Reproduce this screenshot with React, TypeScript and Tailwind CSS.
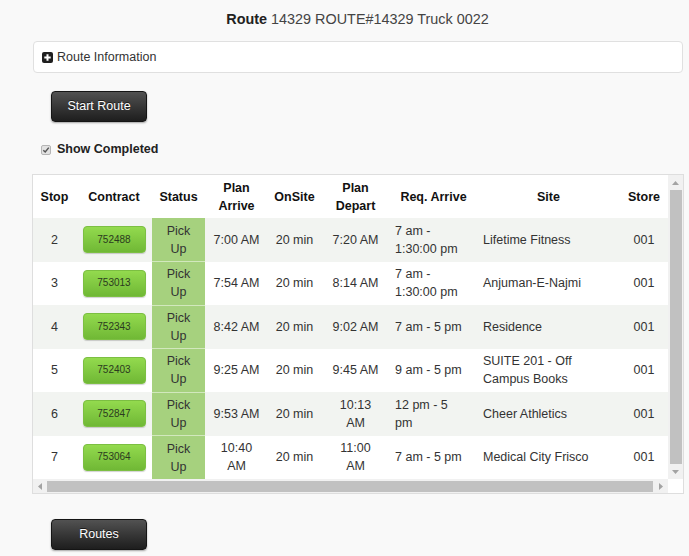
import React from "react";

type Row = {
  stop: string;
  contract: string;
  arrive: React.ReactNode;
  depart: React.ReactNode;
  req: React.ReactNode;
  site: React.ReactNode;
};

const rows: Row[] = [
  { stop: "2", contract: "752488", arrive: "7:00 AM", depart: "7:20 AM", req: <>7 am -<br />1:30:00 pm</>, site: "Lifetime Fitness" },
  { stop: "3", contract: "753013", arrive: "7:54 AM", depart: "8:14 AM", req: <>7 am -<br />1:30:00 pm</>, site: "Anjuman-E-Najmi" },
  { stop: "4", contract: "752343", arrive: "8:42 AM", depart: "9:02 AM", req: "7 am - 5 pm", site: "Residence" },
  { stop: "5", contract: "752403", arrive: "9:25 AM", depart: "9:45 AM", req: "9 am - 5 pm", site: <>SUITE 201 - Off<br />Campus Books</> },
  { stop: "6", contract: "752847", arrive: "9:53 AM", depart: <>10:13<br />AM</>, req: <>12 pm - 5<br />pm</>, site: "Cheer Athletics" },
  { stop: "7", contract: "753064", arrive: <>10:40<br />AM</>, depart: <>11:00<br />AM</>, req: "7 am - 5 pm", site: "Medical City Frisco" },
];

function DarkButton({ children }: { children: React.ReactNode }) {
  return (
    <button className="w-[96px] h-[31px] rounded-[4px] border border-[#151515] bg-gradient-to-b from-[#525252] to-[#1e1e1e] text-white text-[12.5px] shadow-[0_1px_2px_rgba(0,0,0,0.35)] [text-shadow:0_-1px_0_rgba(0,0,0,0.6)]">
      {children}
    </button>
  );
}

export default function App() {
  return (
    <div className="w-[689px] h-[556px] overflow-hidden bg-[#f9f9f9] font-['Liberation_Sans',Arial,sans-serif] text-[#333]">
      {/* Title */}
      <div className="pt-[10px] pl-[26px] text-center text-[14.4px] leading-[18px] text-[#444]">
        <span className="font-bold text-[#222]">Route</span> 14329 ROUTE#14329 Truck 0022
      </div>

      {/* Route Information panel */}
      <div className="mt-[13px] ml-[33px] w-[650px] h-[32px] rounded-[4px] border border-[#e0e0e0] bg-white flex items-center pl-[8px] gap-[4px] text-[12.5px] text-[#333]">
        <svg width="11" height="11" viewBox="0 0 11 11">
          <rect x="0" y="0" width="11" height="11" rx="2" fill="#1f1f1f" />
          <path d="M5.5 2.3v6.4M2.3 5.5h6.4" stroke="#fff" strokeWidth="2" />
        </svg>
        <span>Route Information</span>
      </div>

      {/* Start Route */}
      <div className="mt-[18px] ml-[51px]">
        <DarkButton>Start Route</DarkButton>
      </div>

      {/* Show Completed */}
      <div className="mt-[19px] ml-[41px] flex items-center gap-[6px] h-[17px]">
        <span className="w-[10px] h-[10px] rounded-[2px] border border-[#b5b5b5] bg-[#e2e2e2] flex items-center justify-center">
          <svg width="8" height="8" viewBox="0 0 8 8">
            <path d="M1.3 4.2 L3.2 6 L6.8 1.6" fill="none" stroke="#555" strokeWidth="1.5" />
          </svg>
        </span>
        <span className="font-bold text-[12.5px] text-[#222]">Show Completed</span>
      </div>

      {/* Table container */}
      <div className="mt-[16px] ml-[32px] w-[652px] border border-[#dedede] bg-white">
        <div className="flex">
          <div className="w-[635px] h-[304px] overflow-hidden">
            <table className="table-fixed w-[635px] border-collapse text-[12.5px] leading-[18px]">
              <colgroup>
                <col className="w-[43px]" />
                <col className="w-[76px]" />
                <col className="w-[53px]" />
                <col className="w-[63px]" />
                <col className="w-[53px]" />
                <col className="w-[69px]" />
                <col className="w-[87px]" />
                <col className="w-[143px]" />
                <col className="w-[48px]" />
              </colgroup>
              <thead>
                <tr className="h-[43px] bg-white font-bold text-[#111]">
                  <th className="text-center align-middle font-bold">Stop</th>
                  <th className="text-center align-middle font-bold">Contract</th>
                  <th className="text-center align-middle font-bold">Status</th>
                  <th className="text-center align-middle font-bold">Plan<br />Arrive</th>
                  <th className="text-center align-middle font-bold">OnSite</th>
                  <th className="text-center align-middle font-bold">Plan<br />Depart</th>
                  <th className="text-center align-middle font-bold">Req. Arrive</th>
                  <th className="text-center align-middle font-bold">Site</th>
                  <th className="text-center align-middle font-bold">Store</th>
                </tr>
              </thead>
              <tbody>
                {rows.map((r, i) => (
                  <tr key={r.stop} className={i % 2 === 0 ? "h-[43.5px] bg-[#f2f4f1]" : "h-[43.5px] bg-white"}>
                    <td className="text-center align-middle">{r.stop}</td>
                    <td className="text-center align-middle">
                      <div className="mx-auto w-[63px] h-[27px] rounded-[4px] border border-[#7cbf42] bg-gradient-to-b from-[#93da4e] to-[#70b835] shadow-[0_1px_1px_rgba(0,0,0,0.18)] flex items-center justify-center text-[10px] text-[#2b3a20]">
                        {r.contract}
                      </div>
                    </td>
                    <td className={i === 0 ? "text-center align-middle bg-[#a6d17e] text-[#333]" : "text-center align-middle bg-[#a6d17e] text-[#333] border-t border-[#d2e8bd]"}>
                      Pick<br />Up
                    </td>
                    <td className="text-center align-middle">{r.arrive}</td>
                    <td className="text-center align-middle">20 min</td>
                    <td className="text-center align-middle">{r.depart}</td>
                    <td className="text-left align-middle pl-[5px] whitespace-nowrap">{r.req}</td>
                    <td className="text-left align-middle pl-[6px] whitespace-nowrap">{r.site}</td>
                    <td className="text-center align-middle">001</td>
                  </tr>
                ))}
              </tbody>
            </table>
          </div>
          {/* vertical scrollbar */}
          <div className="w-[15px] h-[304px] bg-[#f1f1f1] flex flex-col items-center">
            <div className="h-[15px] w-full flex items-center justify-center">
              <svg width="7" height="4" viewBox="0 0 7 4"><path d="M0 4 L3.5 0 L7 4 Z" fill="#a3a3a3" /></svg>
            </div>
            <div className="w-[12px] flex-1 bg-[#c1c1c1]" />
            <div className="h-[15px] w-full flex items-center justify-center">
              <svg width="7" height="4" viewBox="0 0 7 4"><path d="M0 0 L3.5 4 L7 0 Z" fill="#a3a3a3" /></svg>
            </div>
          </div>
        </div>
        {/* horizontal scrollbar */}
        <div className="flex h-[14px]">
          <div className="w-[635px] bg-[#f1f1f1] flex items-center">
            <div className="w-[14px] h-full flex items-center justify-center">
              <svg width="4" height="7" viewBox="0 0 4 7"><path d="M4 0 L0 3.5 L4 7 Z" fill="#a3a3a3" /></svg>
            </div>
            <div className="flex-1 h-[11px] bg-[#c1c1c1]" />
            <div className="w-[15px] h-full flex items-center justify-center">
              <svg width="4" height="7" viewBox="0 0 4 7"><path d="M0 0 L4 3.5 L0 7 Z" fill="#a3a3a3" /></svg>
            </div>
          </div>
          <div className="w-[15px] bg-white" />
        </div>
      </div>

      {/* Routes */}
      <div className="mt-[25px] ml-[51px]">
        <DarkButton>Routes</DarkButton>
      </div>
    </div>
  );
}
